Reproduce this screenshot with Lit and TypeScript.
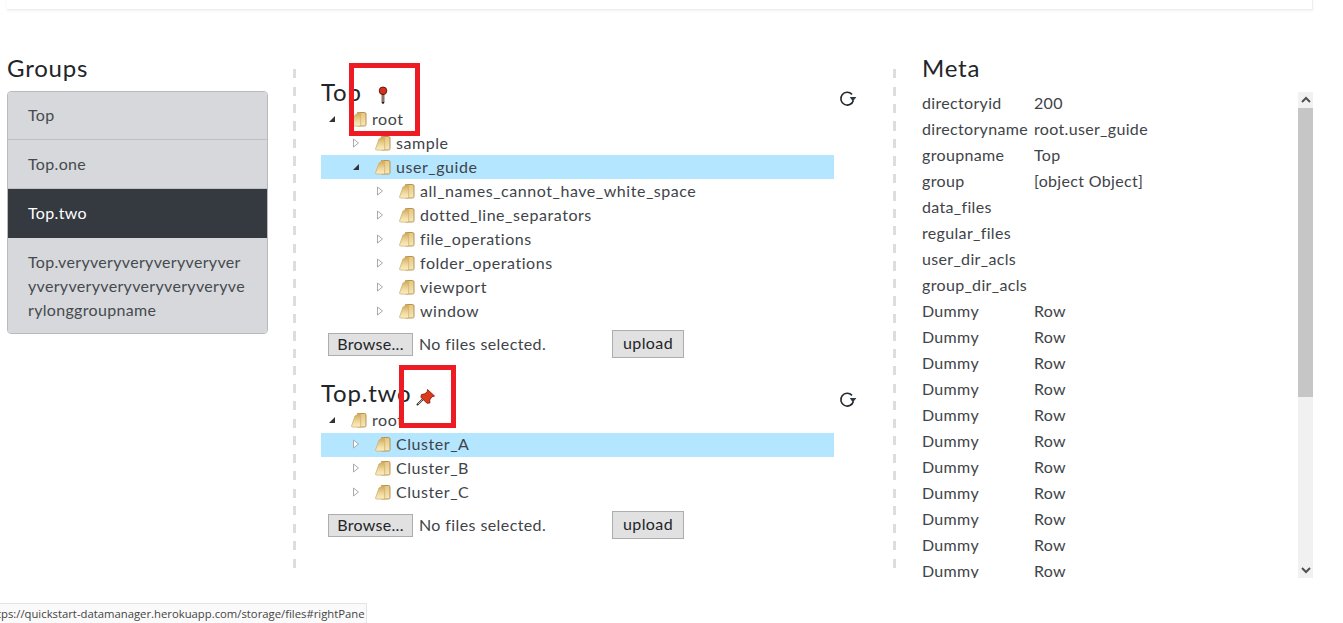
import { LitElement, html, css } from "lit";
import { customElement } from "lit/decorators.js";

const folder = html`<svg class="folder" viewBox="0 0 16 16" width="16" height="16">
  <defs>
    <linearGradient id="fb" x1="0" y1="0" x2="0" y2="1"><stop offset="0" stop-color="#e4c681"/><stop offset="1" stop-color="#f6e8bd"/></linearGradient>
    <linearGradient id="ff" x1="0" y1="0" x2="0" y2="1"><stop offset="0" stop-color="#cfa658"/><stop offset="0.55" stop-color="#edd596"/><stop offset="1" stop-color="#fbf0c8"/></linearGradient>
  </defs>
  <path d="M6.5 1.5h7a1.5 1.5 0 0 1 1.5 1.5v10.5a1.5 1.5 0 0 1-1.5 1.5H6.5z" fill="url(#fb)" stroke="#b8924e" stroke-width="1"/>
  <path d="M4 4l3.5-2.2h1.2l1 1.4V15H1.6a1 1 0 0 1-1-1.2z" fill="url(#ff)" stroke="#d2b06c" stroke-width="0.8"/>
</svg>`;

const arrowOpen = html`<svg class="arrow" viewBox="0 0 8 8" width="8" height="8"><path d="M7 1v6H1z" fill="#333"/></svg>`;
const arrowClosed = html`<svg class="arrow" viewBox="0 0 8 10" width="8" height="10"><path d="M1.5 1l5 4-5 4z" fill="#fff" stroke="#aaa"/></svg>`;

const reload = html`<svg class="reload" viewBox="0 0 19 18" width="19" height="18">
  <path d="M14 4.4A6.4 6.4 0 1 0 15.4 10.5" fill="none" stroke="#23282c" stroke-width="1.6"/>
  <path d="M11.8 7h6.6l-3.6 4.4z" fill="#2c3a44"/>
</svg>`;

const pinSmall = html`<svg class="pin-a" viewBox="0 0 12 18" width="12" height="18">
  <path d="M6 8v8.5" stroke="#2a1010" stroke-width="2.6" stroke-linecap="round"/>
  <path d="M6 9v7" stroke="#f0d8c0" stroke-width="1"/>
  <circle cx="6" cy="4.8" r="3.8" fill="#d5301c" stroke="#5a1008" stroke-width="0.9"/>
</svg>`;

const pinTilt = html`<svg class="pin-b" viewBox="0 0 20 18" width="20" height="18">
  <path d="M1.5 16.5l5-5" stroke="#333" stroke-width="2" stroke-linecap="round"/>
  <path d="M2 16l5-5" stroke="#e8e0c8" stroke-width="0.8"/>
  <path d="M11.5 1.5l7 6.5-2.6 0.7-2.2 3.3 0.2 3-3 .2-6-6 .6-2.6 3.4-.8 2.4-2.2z" fill="#dc3a1c" stroke="#8c1c0a" stroke-width="0.9"/>
</svg>`;

type Node = { label: string; level: number; open?: boolean; sel?: boolean };

const tree1: Node[] = [
  { label: "root", level: 0, open: true },
  { label: "sample", level: 1 },
  { label: "user_guide", level: 1, open: true, sel: true },
  { label: "all_names_cannot_have_white_space", level: 2 },
  { label: "dotted_line_separators", level: 2 },
  { label: "file_operations", level: 2 },
  { label: "folder_operations", level: 2 },
  { label: "viewport", level: 2 },
  { label: "window", level: 2 },
];
const tree2: Node[] = [
  { label: "root", level: 0, open: true },
  { label: "Cluster_A", level: 1, sel: true },
  { label: "Cluster_B", level: 1 },
  { label: "Cluster_C", level: 1 },
];

const metaNamed: [string, string][] = [
  ["directoryid", "200"],
  ["directoryname", "root.user_guide"],
  ["groupname", "Top"],
  ["group", "[object Object]"],
  ["data_files", ""],
  ["regular_files", ""],
  ["user_dir_acls", ""],
  ["group_dir_acls", ""],
];

@customElement("app-root")
export class AppRoot extends LitElement {
  static styles = css`
    :host {
      display: block;
      position: relative;
      width: 1343px;
      height: 623px;
      overflow: hidden;
      background: #fff;
      font-family: "Lato", "Open Sans", sans-serif;
      font-size: 16px;
      color: #212529;
      letter-spacing: 0.4px;
    }
    .topbar {
      height: 9px;
      margin: 0 30px 0 7px;
      background: #fff;
      border-bottom: 1px solid #eee;
      border-right: 1px solid #eee;
      box-shadow: 0 1px 3px rgba(0, 0, 0, 0.06);
    }
    .main {
      display: flex;
      align-items: flex-start;
      padding: 44px 0 0 7px;
    }
    h2 {
      margin: 0;
      font-size: 24px;
      line-height: 27px;
      padding-bottom: 2px;
      font-weight: 400;
      letter-spacing: 0.8px;
      white-space: nowrap;
    }
    .left {
      width: 261px;
      margin-right: 25px;
    }
    .left h2 {
      margin-bottom: 8px;
    }
    .list {
      border: 1px solid #b8babd;
      border-radius: 4px;
      overflow: hidden;
    }
    .item {
      padding: 12px 20px;
      line-height: 24px;
      height: 24px;
      background: #d6d8db;
      color: #464a4e;
      border-bottom: 1px solid #bfc1c4;
      letter-spacing: 0.33px;
    }
    .item.first {
      padding-top: 11px;
    }
    .item.tall {
      height: 72px;
      padding-bottom: 11px;
      border-bottom: 0;
      white-space: nowrap;
    }
    .item.active {
      margin: 0 -1px;
      padding-left: 21px;
      background: #343a40;
      color: #fff;
      border-bottom-color: #343a40;
    }
    .pane {
      width: 572px;
      height: 495px;
      margin-top: 15px;
      padding: 9px 3px 0 28px;
      background-image: repeating-linear-gradient(#ddd 0 9px, transparent 9px 17.5px),
        repeating-linear-gradient(#ddd 0 9px, transparent 9px 17.5px);
      background-size: 3px 100%;
      background-position: left top, right top;
      background-repeat: no-repeat;
    }
    .section {
      width: 535px;
    }
    .section + .section {
      margin-top: 21px;
    }
    .head {
      position: relative;
      display: flex;
      align-items: center;
      height: 29px;
    }
    .head svg.pin-a {
      margin-left: 15px;
      margin-top: 5px;
    }
    .head svg.pin-b {
      margin-left: 5px;
      margin-top: 7px;
    }
    .head svg.reload {
      margin-left: auto;
      margin-top: 12px;
      margin-right: -1px;
    }
    .mark {
      position: absolute;
      box-sizing: border-box;
      border: 5px solid #ed1c24;
    }
    .mark.a {
      left: 28px;
      top: -15px;
      width: 71px;
      height: 73px;
    }
    .mark.b {
      left: 78px;
      top: -14px;
      width: 57px;
      height: 63px;
    }
    .tree {
      width: 513px;
    }
    .node {
      display: flex;
      align-items: center;
      height: 24px;
      color: #404448;
      letter-spacing: 0.55px;
    }
    .node.sel {
      background: #b4e6ff;
    }
    .second .node.sel {
      box-shadow: inset 0 1px 0 #fff, 0 1px 0 #b4e6ff;
    }
    .label {
      padding-bottom: 2px;
    }
    .twist {
      width: 8px;
      margin-right: 15px;
      display: flex;
      justify-content: center;
      flex: none;
    }
    .node svg.folder {
      margin-right: 5px;
      flex: none;
    }
    .uploader {
      display: flex;
      align-items: center;
      height: 28px;
      margin-top: 7px;
      padding-left: 7px;
      color: #404448;
    }
    .browse {
      box-sizing: border-box;
      width: 85px;
      height: 23px;
      margin-right: 6px;
      background: #e1e1e1;
      border: 1px solid #adadad;
      color: #212529;
      text-align: center;
      line-height: 19px;
      letter-spacing: 0.3px;
    }
    .nofile {
      width: 193px;
      padding-bottom: 2px;
    }
    .upload {
      box-sizing: border-box;
      width: 72px;
      height: 28px;
      background: #e1e1e1;
      border: 1px solid #adadad;
      color: #212529;
      text-align: center;
      line-height: 24px;
    }
    .right {
      width: 391px;
      padding-left: 26px;
    }
    .right h2 {
      margin-bottom: 9px;
    }
    .scroller {
      display: flex;
      height: 486px;
    }
    .rows {
      flex: 1;
      overflow: hidden;
      color: #404448;
    }
    .row {
      display: grid;
      grid-template-columns: 112px 1fr;
      height: 26px;
      line-height: 21px;
      white-space: nowrap;
      letter-spacing: 0.33px;
    }
    .bar {
      width: 15px;
      margin-left: auto;
      display: flex;
      flex-direction: column;
      background: #f1f1f1;
      flex: none;
    }
    .btn {
      height: 16px;
      display: flex;
      align-items: center;
      justify-content: center;
      flex: none;
    }
    .thumb {
      height: 289px;
      background: #c6c6c6;
      flex: none;
    }
    .track {
      flex: 1;
    }
    .status {
      position: absolute;
      left: 0;
      bottom: 0;
      width: 367px;
      height: 20px;
      box-sizing: border-box;
      overflow: hidden;
      background: #fafafa;
      border-top: 1px solid #e4e4e4;
      border-right: 1px solid #e4e4e4;
      font-family: "Open Sans", sans-serif;
      font-size: 11.3px;
      letter-spacing: 0;
      line-height: 19px;
      color: #444;
      white-space: nowrap;
    }
    .status span {
      display: block;
      margin-left: -14px;
    }
  `;

  private renderTree(nodes: Node[]) {
    return html`<div class="tree">
      ${nodes.map(
        (n) => html`<div class="node ${n.sel ? "sel" : ""}">
          <span class="twist" style="margin-left:${7 + n.level * 24}px"
            >${n.open ? arrowOpen : arrowClosed}</span
          >
          ${folder}<span class="label">${n.label}</span>
        </div>`
      )}
    </div>`;
  }

  private renderUploader() {
    return html`<div class="uploader">
      <div class="browse">Browse...</div>
      <div class="nofile">No files selected.</div>
      <div class="upload">upload</div>
    </div>`;
  }

  render() {
    const rows: [string, string][] = [...metaNamed];
    for (let i = 0; i < 14; i++) rows.push(["Dummy", "Row"]);
    return html`
      <div class="topbar"></div>
      <div class="main">
        <div class="left">
          <h2>Groups</h2>
          <div class="list">
            <div class="item first">Top</div>
            <div class="item">Top.one</div>
            <div class="item active">Top.two</div>
            <div class="item tall">
              Top.veryveryveryveryveryver<br />yveryveryveryveryveryveryve<br />rylonggroupname
            </div>
          </div>
        </div>
        <div class="pane">
          <div class="section">
            <div class="head">
              <h2>Top</h2>
              ${pinSmall}${reload}
              <div class="mark a"></div>
            </div>
            ${this.renderTree(tree1)} ${this.renderUploader()}
          </div>
          <div class="section second">
            <div class="head">
              <h2>Top.two</h2>
              ${pinTilt}${reload}
              <div class="mark b"></div>
            </div>
            ${this.renderTree(tree2)} ${this.renderUploader()}
          </div>
        </div>
        <div class="right">
          <h2>Meta</h2>
          <div class="scroller">
            <div class="rows">
              ${rows.map(
                ([k, v]) => html`<div class="row"><span>${k}</span><span>${v}</span></div>`
              )}
            </div>
            <div class="bar">
              <div class="btn">
                <svg viewBox="0 0 10 8" width="10" height="8"><path d="M1 6l4-4 4 4" fill="none" stroke="#505050" stroke-width="2"/></svg>
              </div>
              <div class="thumb"></div>
              <div class="track"></div>
              <div class="btn">
                <svg viewBox="0 0 10 8" width="10" height="8"><path d="M1 2l4 4 4-4" fill="none" stroke="#505050" stroke-width="2"/></svg>
              </div>
            </div>
          </div>
        </div>
      </div>
      <div class="status"><span>https://quickstart-datamanager.herokuapp.com/storage/files#rightPane</span></div>
    `;
  }
}
